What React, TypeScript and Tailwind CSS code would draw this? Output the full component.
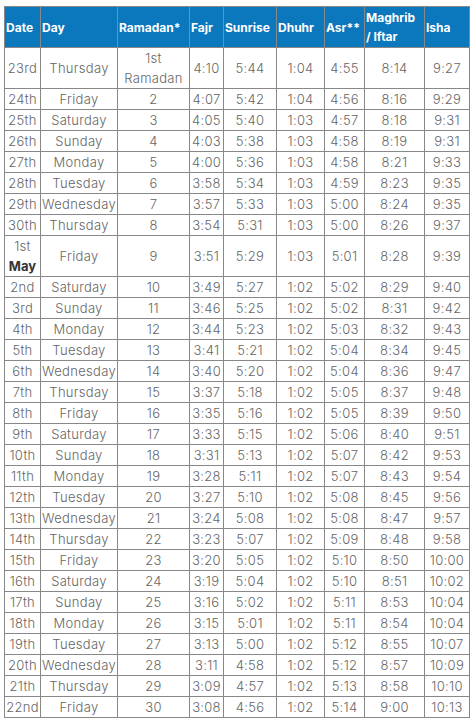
const rows: string[][] = [
  ["23rd", "Thursday", "1st Ramadan", "4:10", "5:44", "1:04", "4:55", "8:14", "9:27"],
  ["24th", "Friday", "2", "4:07", "5:42", "1:04", "4:56", "8:16", "9:29"],
  ["25th", "Saturday", "3", "4:05", "5:40", "1:03", "4:57", "8:18", "9:31"],
  ["26th", "Sunday", "4", "4:03", "5:38", "1:03", "4:58", "8:19", "9:31"],
  ["27th", "Monday", "5", "4:00", "5:36", "1:03", "4:58", "8:21", "9:33"],
  ["28th", "Tuesday", "6", "3:58", "5:34", "1:03", "4:59", "8:23", "9:35"],
  ["29th", "Wednesday", "7", "3:57", "5:33", "1:03", "5:00", "8:24", "9:35"],
  ["30th", "Thursday", "8", "3:54", "5:31", "1:03", "5:00", "8:26", "9:37"],
  ["1st May", "Friday", "9", "3:51", "5:29", "1:03", "5:01", "8:28", "9:39"],
  ["2nd", "Saturday", "10", "3:49", "5:27", "1:02", "5:02", "8:29", "9:40"],
  ["3rd", "Sunday", "11", "3:46", "5:25", "1:02", "5:02", "8:31", "9:42"],
  ["4th", "Monday", "12", "3:44", "5:23", "1:02", "5:03", "8:32", "9:43"],
  ["5th", "Tuesday", "13", "3:41", "5:21", "1:02", "5:04", "8:34", "9:45"],
  ["6th", "Wednesday", "14", "3:40", "5:20", "1:02", "5:04", "8:36", "9:47"],
  ["7th", "Thursday", "15", "3:37", "5:18", "1:02", "5:05", "8:37", "9:48"],
  ["8th", "Friday", "16", "3:35", "5:16", "1:02", "5:05", "8:39", "9:50"],
  ["9th", "Saturday", "17", "3:33", "5:15", "1:02", "5:06", "8:40", "9:51"],
  ["10th", "Sunday", "18", "3:31", "5:13", "1:02", "5:07", "8:42", "9:53"],
  ["11th", "Monday", "19", "3:28", "5:11", "1:02", "5:07", "8:43", "9:54"],
  ["12th", "Tuesday", "20", "3:27", "5:10", "1:02", "5:08", "8:45", "9:56"],
  ["13th", "Wednesday", "21", "3:24", "5:08", "1:02", "5:08", "8:47", "9:57"],
  ["14th", "Thursday", "22", "3:23", "5:07", "1:02", "5:09", "8:48", "9:58"],
  ["15th", "Friday", "23", "3:20", "5:05", "1:02", "5:10", "8:50", "10:00"],
  ["16th", "Saturday", "24", "3:19", "5:04", "1:02", "5:10", "8:51", "10:02"],
  ["17th", "Sunday", "25", "3:16", "5:02", "1:02", "5:11", "8:53", "10:04"],
  ["18th", "Monday", "26", "3:15", "5:01", "1:02", "5:11", "8:54", "10:04"],
  ["19th", "Tuesday", "27", "3:13", "5:00", "1:02", "5:12", "8:55", "10:07"],
  ["20th", "Wednesday", "28", "3:11", "4:58", "1:02", "5:12", "8:57", "10:09"],
  ["21th", "Thursday", "29", "3:09", "4:57", "1:02", "5:13", "8:58", "10:10"],
  ["22nd", "Friday", "30", "3:08", "4:56", "1:02", "5:14", "9:00", "10:13"],
];

const headers = ["Date", "Day", "Ramadan*", "Fajr", "Sunrise", "Dhuhr", "Asr**", "Maghrib", "Isha"];
const widths = ["w-[36px]", "w-[77px]", "w-[72px]", "w-[34px]", "w-[53px]", "w-[48px]", "w-[40px]", "w-[60px]", "w-[45px]"];

export default function App() {
  return (
    <div className="bg-white w-[475px] h-[726px] pt-[6px] pl-[4px] font-['Inter',sans-serif]">
      <table className="table-fixed border-collapse w-[465px] border border-[#444]">
        <colgroup>
          {widths.map((w, i) => (
            <col key={i} className={w} />
          ))}
        </colgroup>
        <thead>
          <tr className="h-[41px] bg-[#0b77bd]">
            {headers.map((h) => (
              <th
                key={h}
                className="border border-[#888] px-[1px] text-left align-middle text-[12px] leading-[19px] font-bold text-white"
              >
                {h === "Maghrib" ? (
                  <>
                    Maghrib
                    <br />/ Iftar
                  </>
                ) : (
                  h
                )}
              </th>
            ))}
          </tr>
        </thead>
        <tbody>
          {rows.map((r) => {
            const tall = r[0] === "1st May" || r[2] === "1st Ramadan";
            return (
              <tr key={r[0]} className={tall ? "h-[41px]" : "h-[21px]"}>
                {r.map((c, i) => (
                  <td
                    key={i}
                    className="border border-[#888] p-0 text-center align-middle text-[13px] leading-[20px] font-light tracking-[0.3px] text-[#666]"
                  >
                    {c === "1st May" ? (
                      <>
                        1st
                        <br />
                        <b className="font-bold tracking-normal text-[#333]">May</b>
                      </>
                    ) : (
                      c
                    )}
                  </td>
                ))}
              </tr>
            );
          })}
        </tbody>
      </table>
    </div>
  );
}
